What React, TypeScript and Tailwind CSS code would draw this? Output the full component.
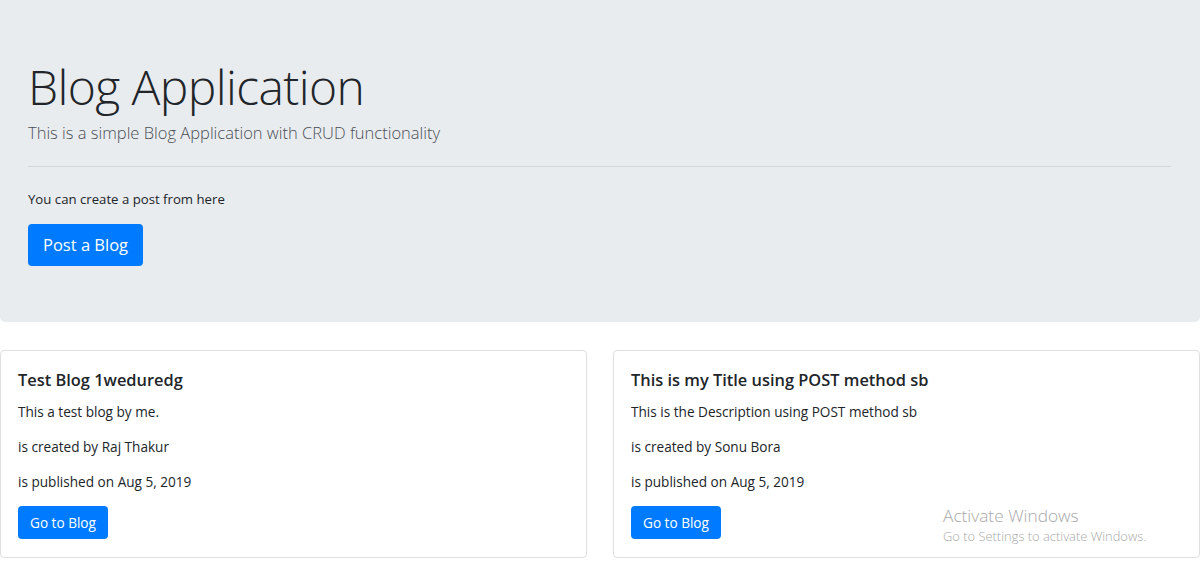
import React from "react";

const posts = [
  {
    title: "Test Blog 1weduredg",
    description: "This a test blog by me.",
    author: "Raj Thakur",
    date: "Aug 5, 2019",
  },
  {
    title: "This is my Title using POST method sb",
    description: "This is the Description using POST method sb",
    author: "Sonu Bora",
    date: "Aug 5, 2019",
  },
];

function PostCard({ post }: { post: (typeof posts)[number] }) {
  return (
    <div className="rounded border border-[#dfdfdf] bg-white px-[17px] pt-[18px] pb-[18px]">
      <h5 className="text-[16.4px] font-semibold leading-[22px] text-[#212529] mb-[10px]">{post.title}</h5>
      <p className="text-[13.6px] leading-[21px] mb-[14px]">{post.description}</p>
      <p className="text-[13.6px] leading-[21px] mb-[14px]">is created by {post.author}</p>
      <p className="text-[13.6px] leading-[21px] mb-[14px]">is published on {post.date}</p>
      <button className="bg-[#007bff] text-white text-[13.6px] leading-[21px] px-[12px] py-[6px] rounded">
        Go to Blog
      </button>
    </div>
  );
}

export default function App() {
  return (
    <div className="relative w-[1200px] h-[561px] overflow-hidden bg-white text-[#212529] font-['Open_Sans',sans-serif]">
      <div className="bg-[#e9ecef] rounded-b-[5px] px-[28px] pt-[58px] pb-[56px]">
        <h1 className="text-[48px] font-light leading-[58px] tracking-[-0.6px]">Blog Application</h1>
        <p className="text-[16.5px] font-light leading-[26px] text-[#4a4f55] mt-[4px]">
          This is a simple Blog Application with CRUD functionality
        </p>
        <hr className="border-0 border-t border-[#d3d6d9] mt-[20px] mb-[22px] mr-[1px]" />
        <p className="text-[13.2px] leading-[21px]">You can create a post from here</p>
        <button className="mt-[14px] bg-[#007bff] text-white text-[16.5px] leading-[26px] px-[15px] py-[8px] rounded">
          Post a Blog
        </button>
      </div>

      <div className="grid grid-cols-2 gap-[26px] mt-[28px]">
        {posts.map((post) => (
          <PostCard key={post.title} post={post} />
        ))}
      </div>

      <div className="absolute left-[943px] top-[505px] text-[#a9a9a9] pointer-events-none">
        <div className="text-[17.3px] font-light leading-[22px]">Activate Windows</div>
        <div className="text-[12.9px] font-light leading-[18px]">Go to Settings to activate Windows.</div>
      </div>
    </div>
  );
}
